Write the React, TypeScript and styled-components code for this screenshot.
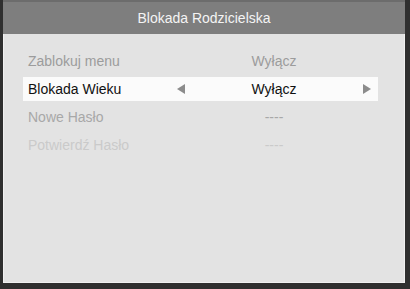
import styled, { createGlobalStyle } from "styled-components";

const Global = createGlobalStyle`
	html, body {
		margin: 0;
		padding: 0;
		background: #2c2c2c;
		font-family: "Liberation Sans", Arial, sans-serif;
	}
`;

const Frame = styled.div`
	width: 410px;
	height: 289px;
	box-sizing: border-box;
	padding: 0 5px 6px 3px;
	background: #2f2f2f;
	display: flex;
	flex-direction: column;
`;

const Header = styled.div`
	height: 34px;
	flex-shrink: 0;
	background: #7e7e7e;
	border-top: 2px solid #6c6c6c;
	box-sizing: border-box;
	display: flex;
	align-items: center;
	justify-content: center;
	color: #f4f4f4;
	font-size: 14px;
`;

const Body = styled.div`
	flex: 1;
	background: #e3e3e3;
	border: 1px solid #f0f0f0;
	border-top: none;
	padding: 15px 26px 0 19px;
	box-sizing: border-box;
`;

const Row = styled.div<{ $active?: boolean; $tone: string }>`
	height: 24px;
	margin-bottom: 4px;
	display: grid;
	grid-template-columns: 147px 11px 176px 10px;
	align-items: center;
	padding: 0 6px 0 5px;
	font-size: 14px;
	color: ${(p) => (p.$active ? "#111" : p.$tone)};
	background: ${(p) => (p.$active ? "#fbfbfb" : "transparent")};
`;

const Value = styled.span`
	text-align: center;
`;

const Arrow = styled.span<{ $dir: "left" | "right"; $show?: boolean }>`
	width: 0;
	height: 0;
	justify-self: center;
	visibility: ${(p) => (p.$show ? "visible" : "hidden")};
	border-top: 5px solid transparent;
	border-bottom: 5px solid transparent;
	${(p) =>
		p.$dir === "left"
			? "border-right: 8px solid #8c8c8c;"
			: "border-left: 8px solid #8c8c8c;"}
`;

const rows = [
	{ label: "Zablokuj menu", value: "Wyłącz", tone: "#9c9c9c" },
	{ label: "Blokada Wieku", value: "Wyłącz", tone: "#9c9c9c", active: true },
	{ label: "Nowe Hasło", value: "----", tone: "#a8a8a8" },
	{ label: "Potwierdź Hasło", value: "----", tone: "#cacaca" },
];

export default function App() {
	return (
		<>
			<Global />
			<Frame>
				<Header>Blokada Rodzicielska</Header>
				<Body>
					{rows.map((r) => (
						<Row key={r.label} $active={r.active} $tone={r.tone}>
							<span>{r.label}</span>
							<Arrow $dir="left" $show={r.active} />
							<Value>{r.value}</Value>
							<Arrow $dir="right" $show={r.active} />
						</Row>
					))}
				</Body>
			</Frame>
		</>
	);
}
